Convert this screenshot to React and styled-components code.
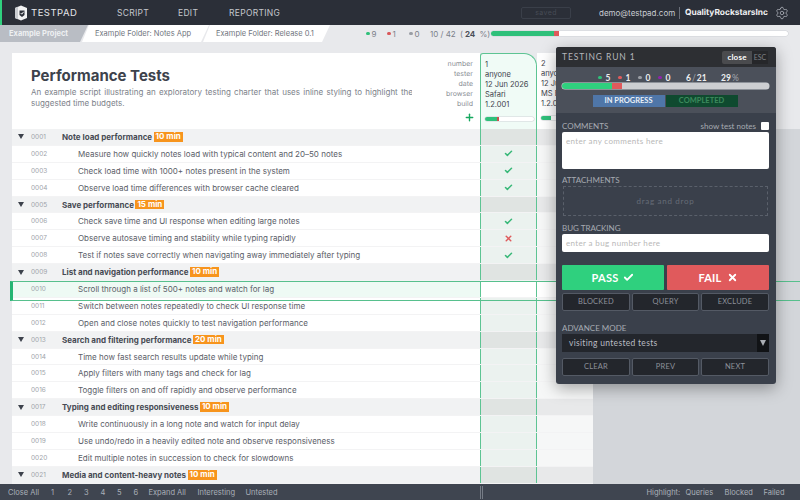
import styled, { createGlobalStyle } from "styled-components";
import { Settings, Check, X, Plus } from "lucide-react";

const GlobalStyle = createGlobalStyle`
  html, body { margin: 0; padding: 0; }
  body { font-family: "Inter", "Liberation Sans", sans-serif; }
  * { box-sizing: border-box; }
`;

const Page = styled.div`
  position: relative;
  width: 800px;
  height: 500px;
  overflow: hidden;
  display: flex;
  flex-direction: column;
  background: #e8e9ec;
`;

/* top bar */
const TopBar = styled.header`
  flex: 0 0 25px;
  display: flex;
  align-items: center;
  background: #2b2f38;
  border-left: 2px solid #2fd07e;
  padding-left: 12px;
  color: #c9ccd2;
`;
const Brand = styled.div`
  display: flex;
  align-items: center;
  gap: 3px;
  width: 103px;
  font-size: 9.5px;
  letter-spacing: 0.5px;
  color: #e4e6ea;
`;
const NavItem = styled.div`
  width: ${(p) => p.$w}px;
  font-size: 8.5px;
  letter-spacing: 0.3px;
  color: #c4c7cd;
`;
const Saved = styled.div`
  width: 50px;
  height: 12px;
  margin-left: 244px;
  border: 1px solid #3a3f49;
  border-radius: 2px;
  text-align: center;
  font-size: 7px;
  line-height: 10px;
  letter-spacing: 0.4px;
  color: #474c56;
`;
const Email = styled.div`
  margin-left: 28px;
  width: 75px;
  font-size: 8px;
  color: #c9ccd2;
  white-space: nowrap;
`;
const Org = styled.div`
  margin-left: 5px;
  padding-left: 5px;
  width: 87px;
  border-left: 1px solid #6a6f79;
  font-size: 8.4px;
  font-weight: 700;
  line-height: 12px;
  text-rendering: geometricPrecision;
  color: #f0f1f3;
  white-space: nowrap;
`;
const Gear = styled(Settings)`
  margin-left: 9px;
  color: #a9adb5;
`;

/* breadcrumb strip */
const Crumbs = styled.div`
  flex: 0 0 17px;
  display: flex;
  align-items: stretch;
`;
const Crumb = styled.div`
  width: ${(p) => p.$w}px;
  margin-right: -6px;
  padding-left: ${(p) => p.$pad}px;
  display: flex;
  align-items: center;
  font-size: 7.5px;
  font-weight: ${(p) => (p.$first ? 700 : 400)};
  color: ${(p) => (p.$first ? "#eef0f2" : "#70757e")};
  background: ${(p) => (p.$first ? "#b9bdc4" : "#fff")};
  white-space: nowrap;
  clip-path: polygon(${(p) => (p.$first ? "0 0" : "7px 0")}, 100% 0, calc(100% - 8px) 100%, 0 100%);
`;
const Summary = styled.div`
  margin-left: 42px;
  display: flex;
  align-items: center;
  font-size: 8px;
  color: #7b8089;
  white-space: nowrap;
`;
const Count = styled.span`
  display: flex;
  align-items: center;
  gap: 2px;
  width: ${(p) => p.$w}px;
`;
const Dot = styled.i`
  width: 3.5px;
  height: 3.5px;
  border-radius: 50%;
  background: ${(p) => p.$c};
`;
const Bold = styled.b`
  color: #4a4f58;
`;
const Track = styled.div`
  display: flex;
  overflow: hidden;
  width: ${(p) => p.$w}px;
  height: ${(p) => p.$h}px;
  border-radius: 3px;
  background: ${(p) => p.$bg || "#fff"};
  box-shadow: 0 0 0 0.5px #d0d3d7;
`;
const Fill = styled.div`
  width: ${(p) => p.$w}px;
  background: ${(p) => p.$c};
`;

/* script card head */
const HeadRow = styled.div`
  flex: 0 0 87px;
  padding: 11px 0 0 12px;
  display: flex;
`;
const Intro = styled.div`
  width: 400px;
  height: 76px;
  padding: 14px 0 0 19px;
  background: #fff;
  color: #3d424c;
`;
const Title = styled.h1`
  margin: 0 0 3px;
  font-size: 15px;
  line-height: 17px;
  font-weight: 700;
`;
const Desc = styled.p`
  margin: 0;
  width: 382px;
  font-size: 8px;
  line-height: 10.5px;
  text-align: justify;
  color: #7d828a;
`;
const Labels = styled.div`
  width: 68px;
  height: 76px;
  padding: 6px 7px 0 0;
  background: #fff;
  text-align: right;
  font-size: 7px;
  line-height: 10px;
  text-rendering: geometricPrecision;
  color: #8b8f96;
`;
const AddIcon = styled(Plus)`
  display: block;
  margin: 3px -2px 0 auto;
  color: #17a85f;
`;
const RunHead = styled.div`
  width: ${(p) => p.$w}px;
  height: 76px;
  padding: 6px 0 0 4px;
  font-size: 7.5px;
  line-height: 10px;
  color: #3d424c;
  white-space: nowrap;
  overflow: hidden;
  background: ${(p) => (p.$active ? "#f0fbf6" : "#fff")};
  ${(p) => p.$active && `
    border: 1px solid #5dc493;
    border-bottom: 0;
    border-radius: 3px 13px 0 0;
  `}
`;
const MiniBar = styled(Track)`
  margin-top: 7px;
`;

/* rows */
const Body = styled.div`
  flex: 1;
  min-height: 0;
  display: flex;
  overflow: hidden;
  background: #d3d6da;
`;
const Gutter = styled.div`
  flex: 0 0 12px;
  background: #e8e9ec;
`;
const Rows = styled.div`
  flex: 0 0 581px;
`;
const Row = styled.div`
  position: relative;
  height: 16.9px;
  display: flex;
  background: ${(p) => (p.$group ? "#f1f2f3" : "#fff")};
  border-bottom: 1px solid #f3f3f4;
  ${(p) => p.$sel && `
    z-index: 1;
    &::after {
      content: "";
      position: absolute;
      top: 0;
      left: -2px;
      width: 790px;
      height: 18px;
      border: 1px solid #57c08d;
      border-left: 3px solid #25b573;
      pointer-events: none;
    }
  `}
`;
const Cell = styled.div`
  flex: 0 0 468px;
  display: flex;
  align-items: center;
  font-size: 8px;
  color: #5b6068;
  background: ${(p) => (p.$sel ? "#eefaf4" : "transparent")};
  white-space: nowrap;
`;
const Toggle = styled.i`
  width: 0;
  height: 0;
  margin-left: 6px;
  border-left: 3px solid transparent;
  border-right: 3px solid transparent;
  border-top: 5px solid #3d424c;
`;
const Num = styled.span`
  margin-left: ${(p) => (p.$group ? 7 : 19)}px;
  width: ${(p) => (p.$group ? 31 : 47)}px;
  font-size: 6.5px;
  color: #a0a4aa;
`;
const GroupName = styled.span`
  font-weight: 700;
  color: #474b53;
`;
const Tag = styled.span`
  margin-left: 1.5px;
  padding: 0 2px;
  background: #f7941d;
  font-weight: 700;
  font-size: 8px;
  line-height: 9.5px;
  color: #fff;
`;
const RunCell = styled.div`
  flex: 0 0 ${(p) => p.$w}px;
  display: flex;
  align-items: center;
  justify-content: center;
  background: ${(p) => p.$bg};
  ${(p) => p.$active && `
    border-left: 1px solid #5dc493;
    border-right: 1px solid #5dc493;
  `}
`;

/* testing run panel */
const Panel = styled.aside`
  position: absolute;
  z-index: 2;
  left: 556px;
  top: 47px;
  width: 220px;
  height: 337px;
  border-radius: 3px;
  overflow: hidden;
  background: #3a404b;
  box-shadow: 0 4px 16px rgba(0, 0, 0, 0.35);
  font-family: "Lato", "Open Sans", sans-serif;
`;
const PanelTitle = styled.div`
  height: 20px;
  padding: 0 8px 0 6px;
  display: flex;
  align-items: center;
  justify-content: space-between;
  background: #2d2f33;
  font-size: 8.5px;
  letter-spacing: 0.9px;
  color: #b4b6ba;
`;
const CloseWrap = styled.div`
  display: flex;
  height: 13px;
  font-size: 8px;
  line-height: 13px;
`;
const CloseBtn = styled.span`
  width: 30px;
  text-align: center;
  font-weight: 700;
  letter-spacing: 0.2px;
  color: #fff;
  background: #4a4b4e;
  border-radius: 2px 0 0 2px;
`;
const EscKey = styled.span`
  width: 16px;
  text-align: center;
  font-size: 7px;
  letter-spacing: 0;
  color: #7d8084;
  background: #26272a;
`;
const StatsBox = styled.div`
  height: 46px;
  padding: 5px 7px 0 6px;
  background: #4b505a;
`;
const Stats = styled.div`
  height: 11px;
  padding-left: 36px;
  display: flex;
  align-items: center;
  font-size: 8.5px;
  font-weight: 700;
  color: #eceef0;
`;
const Stat = styled.span`
  display: flex;
  align-items: center;
  gap: ${(p) => (p.$tight ? 1 : 4)}px;
  width: ${(p) => p.$w}px;
`;
const Faint = styled.span`
  font-weight: 400;
  color: #a5a9b0;
`;
const StatusRow = styled.div`
  margin-top: 6px;
  display: flex;
  justify-content: center;
  gap: 1px;
  padding-right: 1px;
`;
const Status = styled.div`
  width: 72px;
  height: 12px;
  text-align: center;
  font-size: 7.5px;
  font-weight: 700;
  line-height: 12px;
  color: ${(p) => (p.$on ? "#eaf0f7" : "#3d8a5d")};
  background: ${(p) => (p.$on ? "#4f76a8" : "#0f4a2f")};
`;
const Content = styled.div`
  padding: 7px 7px 0 6px;
`;
const LabelRow = styled.div`
  height: 11px;
  display: flex;
  align-items: center;
  justify-content: space-between;
  font-size: 8px;
  color: #a7abb2;
  margin-top: ${(p) => p.$mt || 0}px;
`;
const NotesToggle = styled.span`
  display: flex;
  align-items: center;
  gap: 5px;
`;
const CheckBox = styled.i`
  width: 8px;
  height: 8px;
  background: #fff;
  border-radius: 1px;
`;
const TextBox = styled.div`
  height: ${(p) => p.$h}px;
  margin-top: 1px;
  padding: 3px 4px;
  background: #fff;
  border-radius: 2px;
  font-size: 8px;
  line-height: 12px;
  letter-spacing: 0.35px;
  color: #b8b8b8;
`;
const Drop = styled.div`
  height: 30px;
  margin: 1px 1px 0;
  display: flex;
  align-items: center;
  justify-content: center;
  border: 1px dashed #5a606b;
  font-size: 8px;
  letter-spacing: 0.7px;
  color: #666c77;
`;
const VerdictRow = styled.div`
  margin-top: 13px;
  display: flex;
  gap: 3px;
`;
const Verdict = styled.div`
  flex: 1;
  height: 25px;
  display: flex;
  align-items: center;
  justify-content: center;
  gap: 5px;
  border-radius: 1px;
  background: ${(p) => p.$bg};
  font-size: 11px;
  font-weight: 700;
  letter-spacing: 0.2px;
  color: #fff;
`;
const BtnRow = styled.div`
  margin-top: ${(p) => p.$mt}px;
  display: grid;
  grid-template-columns: 68px 67px 68px;
  gap: 2px;
`;
const DarkBtn = styled.div`
  height: 18px;
  border: 1px solid #545a65;
  border-radius: 2px;
  background: #23262c;
  text-align: center;
  font-size: 7.5px;
  line-height: 16px;
  letter-spacing: 0.2px;
  color: #8d919a;
`;
const Select = styled.div`
  height: 18px;
  margin-top: 1px;
  padding-left: 7px;
  display: flex;
  align-items: center;
  justify-content: space-between;
  background: #23262c;
  font-size: 8.5px;
  letter-spacing: 0.3px;
  color: #b9bcc2;
`;
const Arrow = styled.span`
  width: 12px;
  height: 18px;
  display: flex;
  align-items: center;
  justify-content: center;
  background: #111316;
  &::before {
    content: "";
    border-left: 3px solid transparent;
    border-right: 3px solid transparent;
    border-top: 6px solid #a9adb3;
  }
`;

/* footer */
const Footer = styled.footer`
  flex: 0 0 16px;
  display: flex;
  align-items: center;
  padding-left: 8px;
  background: #3f4550;
  font-size: 7.5px;
  color: #aab0b8;
  white-space: nowrap;
`;
const FootItem = styled.span`
  width: ${(p) => p.$w}px;
`;
const Grip = styled.i`
  width: 3px;
  height: 13px;
  margin-left: 203px;
  border-left: 1px solid #767c86;
  border-right: 1px solid #767c86;
`;
const Highlight = styled.span`
  margin-left: 164px;
  width: 39px;
`;

const rows = [
  { n: "0001", group: true, t: "Note load performance", tag: "10 min" },
  { n: "0002", t: "Measure how quickly notes load with typical content and 20–50 notes", r: "pass" },
  { n: "0003", t: "Check load time with 1000+ notes present in the system", r: "pass" },
  { n: "0004", t: "Observe load time differences with browser cache cleared", r: "pass" },
  { n: "0005", group: true, t: "Save performance", tag: "15 min" },
  { n: "0006", t: "Check save time and UI response when editing large notes", r: "pass" },
  { n: "0007", t: "Observe autosave timing and stability while typing rapidly", r: "fail" },
  { n: "0008", t: "Test if notes save correctly when navigating away immediately after typing", r: "pass" },
  { n: "0009", group: true, t: "List and navigation performance", tag: "10 min" },
  { n: "0010", t: "Scroll through a list of 500+ notes and watch for lag", sel: true },
  { n: "0011", t: "Switch between notes repeatedly to check UI response time" },
  { n: "0012", t: "Open and close notes quickly to test navigation performance" },
  { n: "0013", group: true, t: "Search and filtering performance", tag: "20 min" },
  { n: "0014", t: "Time how fast search results update while typing" },
  { n: "0015", t: "Apply filters with many tags and check for lag" },
  { n: "0016", t: "Toggle filters on and off rapidly and observe performance" },
  { n: "0017", group: true, t: "Typing and editing responsiveness", tag: "10 min" },
  { n: "0018", t: "Write continuously in a long note and watch for input delay" },
  { n: "0019", t: "Use undo/redo in a heavily edited note and observe responsiveness" },
  { n: "0020", t: "Edit multiple notes in succession to check for slowdowns" },
  { n: "0021", group: true, t: "Media and content-heavy notes", tag: "10 min" },
];

function Logo() {
  return (
    <svg width="14" height="16" viewBox="0 0 14 16">
      <path d="M1 3 L7 0.5 L13 3 V13 L7 15.5 L1 13 Z" fill="#f1f2f3" />
      <path d="M1 3 L4 1.8 V14.3 L1 13 Z" fill="#c9ccd1" />
      <path d="M5.5 5.5 H10.5 V10 L8 12 L5.5 10 Z" fill="#2b2f38" />
      <path d="M6.7 8 L7.8 9.2 L9.6 6.8" fill="none" stroke="#f1f2f3" strokeWidth="1" />
    </svg>
  );
}

function TestRow({ row }) {
  const { n, group, t, tag, r, sel } = row;
  return (
    <Row $group={group} $sel={sel}>
      <Cell $sel={sel}>
        {group && <Toggle />}
        <Num $group={group}>{n}</Num>
        {group ? <GroupName>{t}</GroupName> : t}
        {tag && <Tag>{tag}</Tag>}
      </Cell>
      <RunCell $active $w={57} $bg={sel ? "#fff" : group ? "#e0e4e2" : "#ebf2ef"}>
        {r === "pass" && <Check size={9} strokeWidth={4} color="#38b878" />}
        {r === "fail" && <X size={9} strokeWidth={4} color="#df5a5c" />}
      </RunCell>
      <RunCell $w={56} $bg={sel ? "#fff" : group ? "#e8e9ea" : "#f6f7f7"} />
    </Row>
  );
}

export default function App() {
  return (
    <Page>
      <GlobalStyle />
      <TopBar>
        <Brand>
          <Logo />
          TESTPAD
        </Brand>
        <NavItem $w={61}>SCRIPT</NavItem>
        <NavItem $w={51}>EDIT</NavItem>
        <NavItem $w={48}>REPORTING</NavItem>
        <Saved>saved</Saved>
        <Email>demo@testpad.com</Email>
        <Org>QualityRockstarsInc</Org>
        <Gear size={14} strokeWidth={1.4} />
      </TopBar>

      <Crumbs>
        <Crumb $first $w={88} $pad={9}>Example Project</Crumb>
        <Crumb $w={127} $pad={13}>Example Folder: Notes App</Crumb>
        <Crumb $w={127} $pad={13}>Example Folder: Release 0.1</Crumb>
        <Summary>
          <Count $w={21}><Dot $c="#2fc07a" />9</Count>
          <Count $w={22}><Dot $c="#d9575a" />1</Count>
          <Count $w={21}><Dot $c="#9a9ea5" />0</Count>
          <Count $w={30}>10 / 42</Count>
          <Count $w={31}>(<Bold>24</Bold>&nbsp;%)</Count>
          <Track $w={297} $h={5}>
            <Fill $w={63} $c="#2fc07a" />
            <Fill $w={5} $c="#df5a5c" />
          </Track>
        </Summary>
      </Crumbs>

      <HeadRow>
        <Intro>
          <Title>Performance Tests</Title>
          <Desc>
            An example script illustrating an exploratory testing charter that uses inline styling to
            highlight the suggested time budgets.
          </Desc>
        </Intro>
        <Labels>
          number<br />tester<br />date<br />browser<br />build
          <AddIcon size={11} strokeWidth={3} />
        </Labels>
        <RunHead $active $w={57}>
          1<br />anyone<br />12 Jun 2026<br />Safari<br />1.2.001
          <MiniBar $w={49} $h={4}>
            <Fill $w={12} $c="#2fc07a" />
            <Fill $w={2} $c="#c9524f" />
          </MiniBar>
        </RunHead>
        <RunHead $w={56}>
          2<br />anyone<br />12 Jun 2026<br />MS Edge<br />1.2.001
          <MiniBar $w={49} $h={4}>
            <Fill $w={10} $c="#2fc07a" />
          </MiniBar>
        </RunHead>
      </HeadRow>

      <Body>
        <Gutter />
        <Rows>
          {rows.map((row) => (
            <TestRow key={row.n} row={row} />
          ))}
        </Rows>
      </Body>

      <Footer>
        <FootItem $w={43}>Close All</FootItem>
        <FootItem $w={16.5}>1</FootItem>
        <FootItem $w={16.5}>2</FootItem>
        <FootItem $w={16.5}>3</FootItem>
        <FootItem $w={16.5}>4</FootItem>
        <FootItem $w={16.5}>5</FootItem>
        <FootItem $w={15}>6</FootItem>
        <FootItem $w={49}>Expand All</FootItem>
        <FootItem $w={48}>Interesting</FootItem>
        <FootItem $w={31}>Untested</FootItem>
        <Grip />
        <Highlight>Highlight:</Highlight>
        <FootItem $w={39}>Queries</FootItem>
        <FootItem $w={39}>Blocked</FootItem>
        <FootItem $w={20}>Failed</FootItem>
      </Footer>

      <Panel>
        <PanelTitle>
          TESTING RUN 1
          <CloseWrap>
            <CloseBtn>close</CloseBtn>
            <EscKey>ESC</EscKey>
          </CloseWrap>
        </PanelTitle>
        <StatsBox>
          <Stats>
            <Stat $w={20}><Dot $c="#2fc07a" />5</Stat>
            <Stat $w={20}><Dot $c="#df5a5c" />1</Stat>
            <Stat $w={20}><Dot $c="#9a9ea5" />0</Stat>
            <Stat $w={28}><Dot $c="#8e24aa" />0</Stat>
            <Stat $w={35} $tight>6<Faint>/</Faint>21</Stat>
            <Stat $w={25} $tight>29<Faint>%</Faint></Stat>
          </Stats>
          <Track $w={207} $h={6} $bg="#ccced1">
            <Fill $w={50} $c="#2fd07e" />
            <Fill $w={10} $c="#df5a5c" />
          </Track>
          <StatusRow>
            <Status $on>IN PROGRESS</Status>
            <Status>COMPLETED</Status>
          </StatusRow>
        </StatsBox>
        <Content>
          <LabelRow>
            COMMENTS
            <NotesToggle>show test notes<CheckBox /></NotesToggle>
          </LabelRow>
          <TextBox $h={37}>enter any comments here</TextBox>
          <LabelRow $mt={5}>ATTACHMENTS</LabelRow>
          <Drop>drag and drop</Drop>
          <LabelRow $mt={6}>BUG TRACKING</LabelRow>
          <TextBox $h={18}>enter a bug number here</TextBox>
          <VerdictRow>
            <Verdict $bg="#2fd07e">PASS <Check size={11} strokeWidth={4} /></Verdict>
            <Verdict $bg="#e05a5c">FAIL <X size={11} strokeWidth={4} /></Verdict>
          </VerdictRow>
          <BtnRow $mt={3}>
            <DarkBtn>BLOCKED</DarkBtn>
            <DarkBtn>QUERY</DarkBtn>
            <DarkBtn>EXCLUDE</DarkBtn>
          </BtnRow>
          <LabelRow $mt={11}>ADVANCE MODE</LabelRow>
          <Select>visiting untested tests<Arrow /></Select>
          <BtnRow $mt={6}>
            <DarkBtn>CLEAR</DarkBtn>
            <DarkBtn>PREV</DarkBtn>
            <DarkBtn>NEXT</DarkBtn>
          </BtnRow>
        </Content>
      </Panel>
    </Page>
  );
}
